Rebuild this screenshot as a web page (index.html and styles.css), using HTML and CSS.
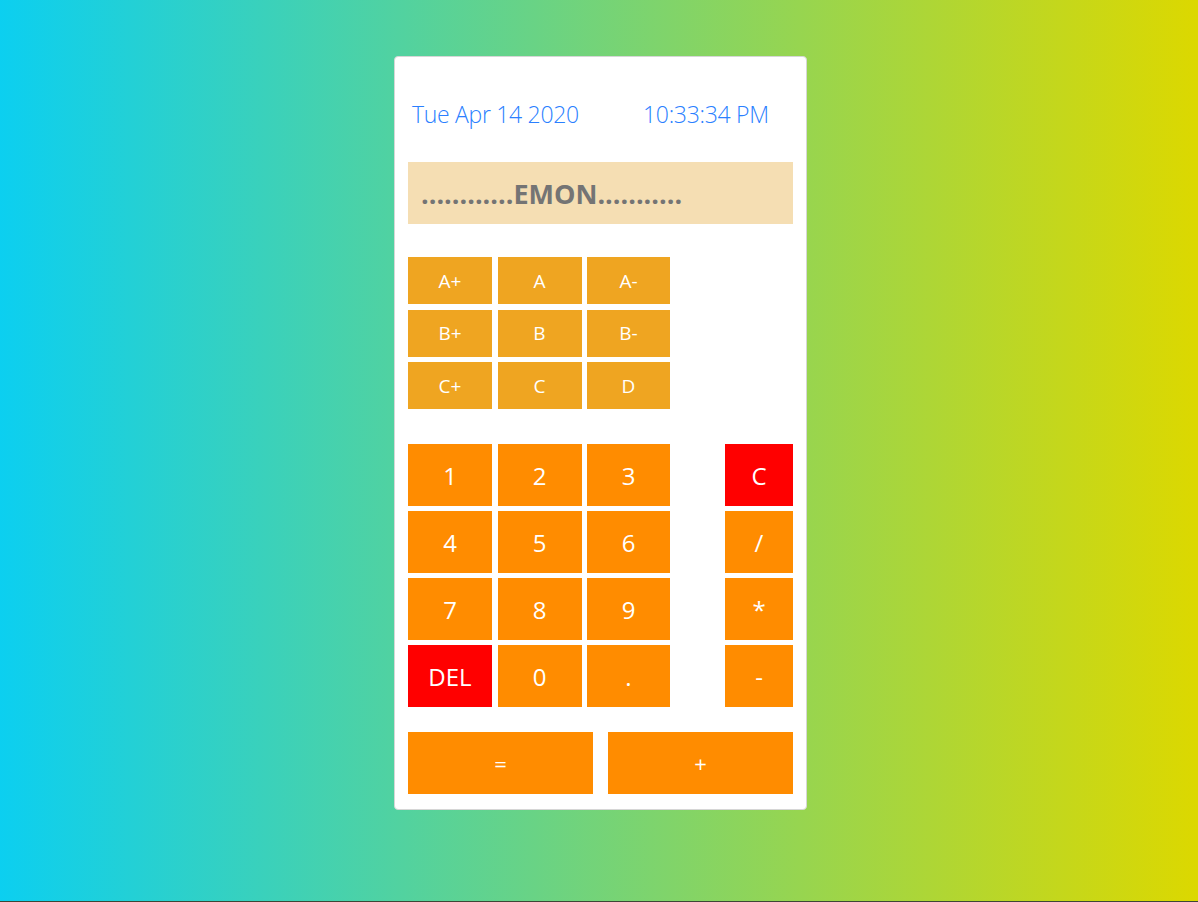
FILE: index.html
```html
<!DOCTYPE html>
<html>
<head>
<meta charset="utf-8">
<link rel="stylesheet" href="styles.css">
</head>
<body>
<div class="card">
  <div class="clock">
    <span class="date">Tue Apr 14 2020</span>
    <span class="time">10:33:34 PM</span>
  </div>
  <div class="display">............EMON...........</div>
  <div class="grades">
    <button class="grade">A+</button>
    <button class="grade">A</button>
    <button class="grade">A-</button>
    <button class="grade">B+</button>
    <button class="grade">B</button>
    <button class="grade">B-</button>
    <button class="grade">C+</button>
    <button class="grade">C</button>
    <button class="grade">D</button>
  </div>
  <div class="keypad">
    <div class="digits">
      <button class="key">1</button>
      <button class="key">2</button>
      <button class="key">3</button>
      <button class="key">4</button>
      <button class="key">5</button>
      <button class="key">6</button>
      <button class="key">7</button>
      <button class="key">8</button>
      <button class="key">9</button>
      <button class="key red">DEL</button>
      <button class="key">0</button>
      <button class="key">.</button>
    </div>
    <div class="ops">
      <button class="key red">C</button>
      <button class="key">/</button>
      <button class="key">*</button>
      <button class="key">-</button>
    </div>
  </div>
  <div class="bottom">
    <button class="key">=</button>
    <button class="key">+</button>
  </div>
</div>
</body>
</html>
```
FILE: styles.css
```css
html {
  background: #3d4636;
  height: 100%;
}
body {
  margin: 0;
  height: 901px;
  background: linear-gradient(to right, #0ccff0, #dcd800);
  font-family: "Open Sans", "Noto Sans", sans-serif;
  padding-top: 56px;
  padding-left: 3px;
  box-sizing: border-box;
}
.card {
  width: 413px;
  margin: 0 auto;
  background: #fff;
  border: 1px solid #d6d6d6;
  border-radius: 4px;
  box-sizing: border-box;
  padding: 0 13px 15px 13px;
}
.clock {
  display: flex;
  height: 105px;
  align-items: center;
  padding-top: 8px;
  box-sizing: border-box;
  color: #2a7fff;
  font-weight: 300;
  font-size: 23px;
  letter-spacing: -0.3px;
}
.date {
  padding-left: 4px;
  width: 231px;
}
.display {
  height: 62px;
  background: #f5deb3;
  color: #747474;
  font-weight: 700;
  font-size: 27px;
  line-height: 64px;
  padding-left: 13px;
}
.grades {
  display: grid;
  grid-template-columns: 84px 84px 83px;
  grid-auto-rows: 47px;
  column-gap: 5.5px;
  row-gap: 5.5px;
  margin-top: 33px;
}
button {
  border: none;
  margin: 0;
  padding: 0;
  font-family: "Open Sans", "Noto Sans", sans-serif;
  color: #fff;
  cursor: pointer;
}
.grade {
  background: #efa521;
  font-size: 19px;
}
.keypad {
  display: flex;
  justify-content: space-between;
  margin-top: 35px;
}
.digits {
  display: grid;
  grid-template-columns: 84px 84px 83px;
  grid-auto-rows: 62px;
  column-gap: 5.5px;
  row-gap: 5px;
}
.ops {
  display: grid;
  grid-template-columns: 68px;
  grid-auto-rows: 62px;
  row-gap: 5px;
}
.key {
  background: #ff8c00;
  font-size: 24px;
}
.key.red {
  background: #ff0000;
}
.bottom {
  display: flex;
  justify-content: space-between;
  margin-top: 25px;
}
.bottom .key {
  width: 185px;
  height: 62px;
  font-size: 22px;
}
```
